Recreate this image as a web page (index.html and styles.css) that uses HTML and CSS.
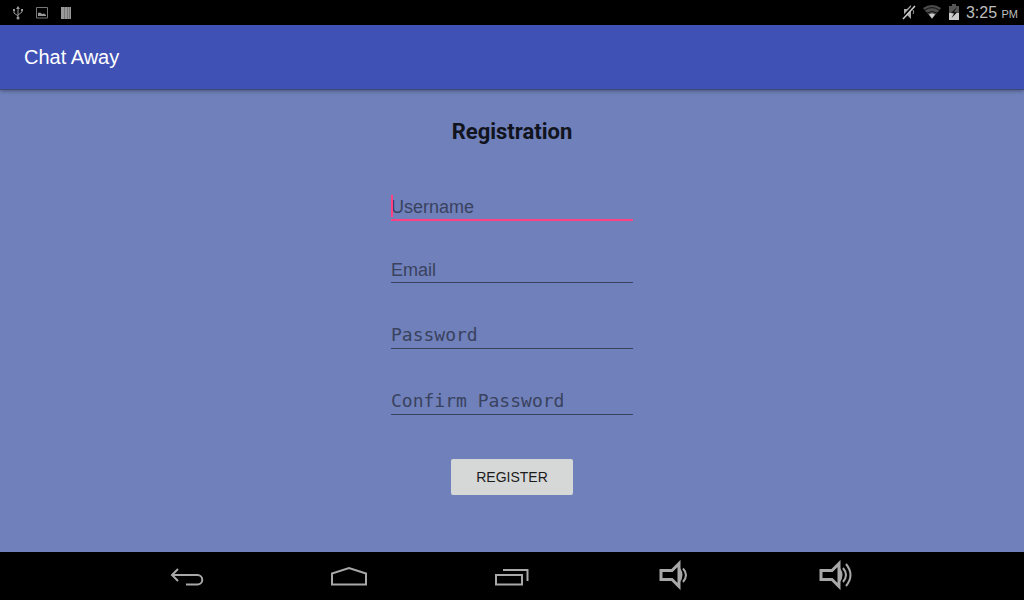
FILE: index.html
```html
<!DOCTYPE html>
<html lang="en">
<head>
<meta charset="utf-8">
<meta name="viewport" content="width=device-width, initial-scale=1">
<title>Chat Away</title>
<link rel="stylesheet" href="styles.css">
</head>
<body>
<div class="screen">
  <div class="status">
    <div class="notices">
      <svg width="10" height="14" viewBox="0 0 10 14" fill="none" stroke="#999"><path d="M5 1v11M1 4v3l4 3M9 4v2L5 9"/><path d="M5 0l2 3H3z" fill="#999" stroke="none"/><circle cx="5" cy="12" r="1.5" fill="#999" stroke="none"/><path d="M0 4h2M8 4h2" stroke-width="2"/></svg>
      <svg width="12" height="12" viewBox="0 0 12 12"><path d="M.5.5h11v10.500H.5z" fill="none" stroke="#777"/><path d="M2 9V6l2-.5L6 7l2-.5L10 8v1z" fill="#999"/></svg>
      <svg width="10" height="12" viewBox="0 0 10 12"><path d="M0 0h10v12H0z" fill="#999"/><path d="M3.500 0v12M6.500 0v12M8.500 0v12" stroke="#777"/></svg>
    </div>
    <div class="system">
      <svg width="14" height="16" viewBox="0 0 14 16"><path d="M2 5h3l4-4v14l-4-4H2z" fill="#aaa"/><path d="M12 1L0 14" stroke="#000" stroke-width="2"/><path d="M13 2L1 15" stroke="#ccc" stroke-width="1.500"/><path d="M11 6q1.500 2 0 4" fill="none" stroke="#999"/></svg>
      <svg width="20" height="15" viewBox="0 0 20 15"><path d="M1 4Q10-2 19 4L10 15z" fill="#4d4d4d"/><path d="M2.500 6.200Q10 1 17.500 6.200M5 9Q10 6 15 9" fill="none" stroke="#111"/><path d="M7 10.500Q10 8.500 13 10.500L10 14.500z" fill="#ccc"/></svg>
      <svg width="12" height="16" viewBox="0 0 12 16"><path d="M4 0h4v2h3v14H1V2h3z" fill="#555"/><path d="M1 9h10v7H1z" fill="#ccc"/><path d="M9 3L3 9l3 .5L3.500 14 9 8.500 6 8z" fill="#111"/></svg>
      <time class="clock" datetime="15:25">3:25 <small>PM</small></time>
    </div>
  </div>
  <header class="appbar"><span>Chat Away</span></header>
  <main class="content">
    <h1 class="title">Registration</h1>
    <form class="form">
      <div class="field focused"><input class="input" type="text" placeholder="Username" aria-label="Username"></div>
      <div class="field"><input class="input" type="email" placeholder="Email" aria-label="Email"></div>
      <div class="field secret"><input class="input" type="password" placeholder="Password" aria-label="Password"></div>
      <div class="field secret"><input class="input" type="password" placeholder="Confirm Password" aria-label="Confirm Password"></div>
      <button class="register" type="button">REGISTER</button>
    </form>
  </main>
  <nav class="navbar" aria-label="System">
    <button class="key" type="button" aria-label="Back"><svg width="36" height="30" viewBox="0 0 36 30"><path d="M3 15h25.500a4.750 4.750 0 0 1 0 9.500H17M9 9l-6 6 6 6"/></svg></button>
    <button class="key" type="button" aria-label="Home"><svg width="36" height="30" viewBox="0 0 36 30"><path d="M1 24.500V13.500L18 8l17 5.500v11z"/></svg></button>
    <button class="key" type="button" aria-label="Recent apps"><svg width="36" height="30" viewBox="0 0 36 30"><path d="M3 15h26v9.500H3zM10 10h24.500v11"/></svg></button>
    <button class="key" type="button" aria-label="Volume down"><svg width="36" height="30" viewBox="0 0 36 30"><path class="horn" d="M6 10.500h11l7-7v23l-7-7H6z"/><path class="fill" d="M25 8q5 7 0 14z"/><path d="M28 8.500q6 6.500 0 13.500"/></svg></button>
    <button class="key" type="button" aria-label="Volume up"><svg width="36" height="30" viewBox="0 0 36 30"><path class="horn" d="M4 10.500h11l7-7v23l-7-7H4z"/><path class="fill" d="M23 8q5 7 0 14z"/><path d="M26 8q6 7 0 14M29 4q9 11 0 22"/></svg></button>
  </nav>
</div>
</body>
</html>
```
FILE: styles.css
```css
* { box-sizing: border-box; }

body {
  margin: 0;
  font-family: "Liberation Sans", Arial, sans-serif;
}

.screen {
  display: flex;
  flex-direction: column;
  min-height: 100vh;
  background: #7080ba;
}

.status {
  display: flex;
  justify-content: space-between;
  align-items: center;
  height: 25px;
  padding: 0 6px 0 13px;
  background: #000;
  color: #bebebe;
}

.notices,
.system {
  display: flex;
  align-items: center;
}

.notices { gap: 13px; }
.system { gap: 6px; }

.system svg { margin-bottom: 2px; }

.clock { font-size: 16px; }
.clock small { font-size: 11px; }

.appbar {
  display: flex;
  align-items: center;
  height: 64px;
  padding: 0 24px;
  background: #3f51b5;
  color: #fff;
  font-size: 20px;
  box-shadow: 0 1px 0 #3c4a78, 0 2px 4px rgba(0, 0, 0, 0.35);
}

.content {
  flex: 1;
  display: flex;
  flex-direction: column;
  align-items: center;
  padding: 29px 16px;
}

.title {
  margin: 0;
  font: bold 22px/28px Roboto, sans-serif;
  color: #11141d;
}

.form {
  display: flex;
  flex-direction: column;
  align-items: center;
  gap: 32px;
  width: 100%;
  max-width: 242px;
  padding-top: 45px;
}

.field {
  position: relative;
  width: 100%;
}

.input {
  display: block;
  width: 100%;
  height: 30px;
  padding: 5px 0 0;
  border: 0;
  border-bottom: 1px solid #39425f;
  border-radius: 0;
  outline: 0;
  background: transparent;
  color: #11141d;
  font: 18px "Liberation Sans", Arial, sans-serif;
}

.input::placeholder {
  color: #39425f;
  opacity: 1;
}

.secret .input {
  height: 34px;
  font-family: "DejaVu Sans Mono", monospace;
}

.focused .input { border-bottom: 2px solid #ff4081; }

.focused::before {
  content: "";
  position: absolute;
  left: 0;
  top: 4px;
  width: 2px;
  height: 22px;
  background: #ff4081;
}

.register {
  min-width: 122px;
  height: 36px;
  margin-top: 12px;
  padding: 0 16px;
  border: 0;
  border-radius: 2px;
  background: #d6d8d7;
  color: #1c1c1c;
  font: 14px "Liberation Sans", Arial, sans-serif;
}

.navbar {
  display: grid;
  grid-template-columns: repeat(5, 1fr);
  height: 48px;
  padding: 0 calc(10% + 5px) 2px calc(10% + 3px);
  background: #000;
}

.key {
  display: flex;
  align-items: center;
  justify-content: center;
  padding: 0;
  border: 0;
  background: none;
}

.key svg {
  fill: none;
  stroke: #a8a8a8;
  stroke-width: 2;
}

.key .horn { stroke-width: 3; }
.key .fill { fill: #a8a8a8; stroke: none; }
```
